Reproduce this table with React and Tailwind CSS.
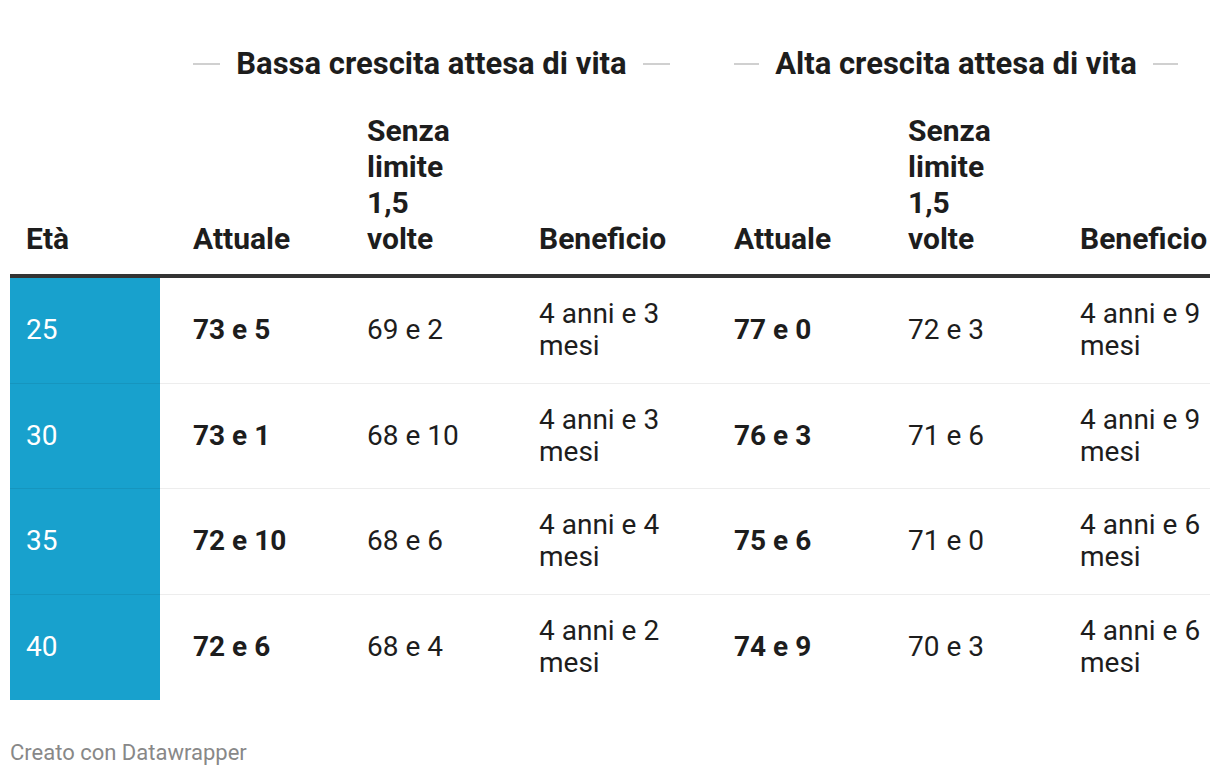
import React from "react";

const rows = [
  { age: "25", a1: "73 e 5", s1: "69 e 2", b1: "4 anni e 3", a2: "77 e 0", s2: "72 e 3", b2: "4 anni e 9" },
  { age: "30", a1: "73 e 1", s1: "68 e 10", b1: "4 anni e 3", a2: "76 e 3", s2: "71 e 6", b2: "4 anni e 9" },
  { age: "35", a1: "72 e 10", s1: "68 e 6", b1: "4 anni e 4", a2: "75 e 6", s2: "71 e 0", b2: "4 anni e 6" },
  { age: "40", a1: "72 e 6", s1: "68 e 4", b1: "4 anni e 2", a2: "74 e 9", s2: "70 e 3", b2: "4 anni e 6" },
];

const cols = "grid grid-cols-[150px_207px_172px_195px_174px_172px_130px]";

const GroupHead = ({ label, className }) => (
  <div className={`col-span-3 flex items-center gap-4 ${className}`}>
    <div className="h-[2px] flex-1 bg-[#d0d0d0]" />
    <span className="whitespace-nowrap text-[31px] font-bold leading-[36px]">{label}</span>
    <div className="h-[2px] flex-1 bg-[#d0d0d0]" />
  </div>
);

const App = () => {
  const cell = "flex items-center border-b border-black/[0.07] h-[105.5px]";
  return (
    <div className="w-[1220px] h-[776px] bg-white text-[#1d1d1d] font-['Roboto',sans-serif] px-[10px] pt-[46px]">
      {/* column groups */}
      <div className={cols}>
        <div />
        <GroupHead label="Bassa crescita attesa di vita" className="pl-[33px] pr-[64px]" />
        <GroupHead label="Alta crescita attesa di vita" className="pr-[32px]" />
      </div>

      {/* header */}
      <div className={`${cols} mt-[31px] border-b-4 border-[#333] pb-[17px] items-end text-[30px] font-bold leading-[36px]`}>
        <div className="pl-4">Età</div>
        <div className="pl-[33px]">Attuale</div>
        <div>Senza<br />limite<br />1,5<br />volte</div>
        <div>Beneficio</div>
        <div>Attuale</div>
        <div>Senza<br />limite<br />1,5<br />volte</div>
        <div className="whitespace-nowrap">Beneficio</div>
      </div>

      {/* body */}
      {rows.map((r, i) => {
        const b = i === rows.length - 1 ? "border-transparent" : "";
        return (
          <div key={r.age} className={`${cols} text-[28px] leading-[32px]`}>
            <div className={`${cell} ${b} bg-[#18a1cd] text-white pl-4`}>{r.age}</div>
            <div className={`${cell} ${b} pl-[33px] font-bold`}>{r.a1}</div>
            <div className={`${cell} ${b}`}>{r.s1}</div>
            <div className={`${cell} ${b}`}>
              <span>{r.b1}<br />mesi</span>
            </div>
            <div className={`${cell} ${b} font-bold`}>{r.a2}</div>
            <div className={`${cell} ${b}`}>{r.s2}</div>
            <div className={`${cell} ${b} whitespace-nowrap`}>
              <span>{r.b2}<br />mesi</span>
            </div>
          </div>
        );
      })}

      <div className="mt-[39px] text-[22px] leading-[28px] text-[#888]">Creato con Datawrapper</div>
    </div>
  );
};

export default App;
